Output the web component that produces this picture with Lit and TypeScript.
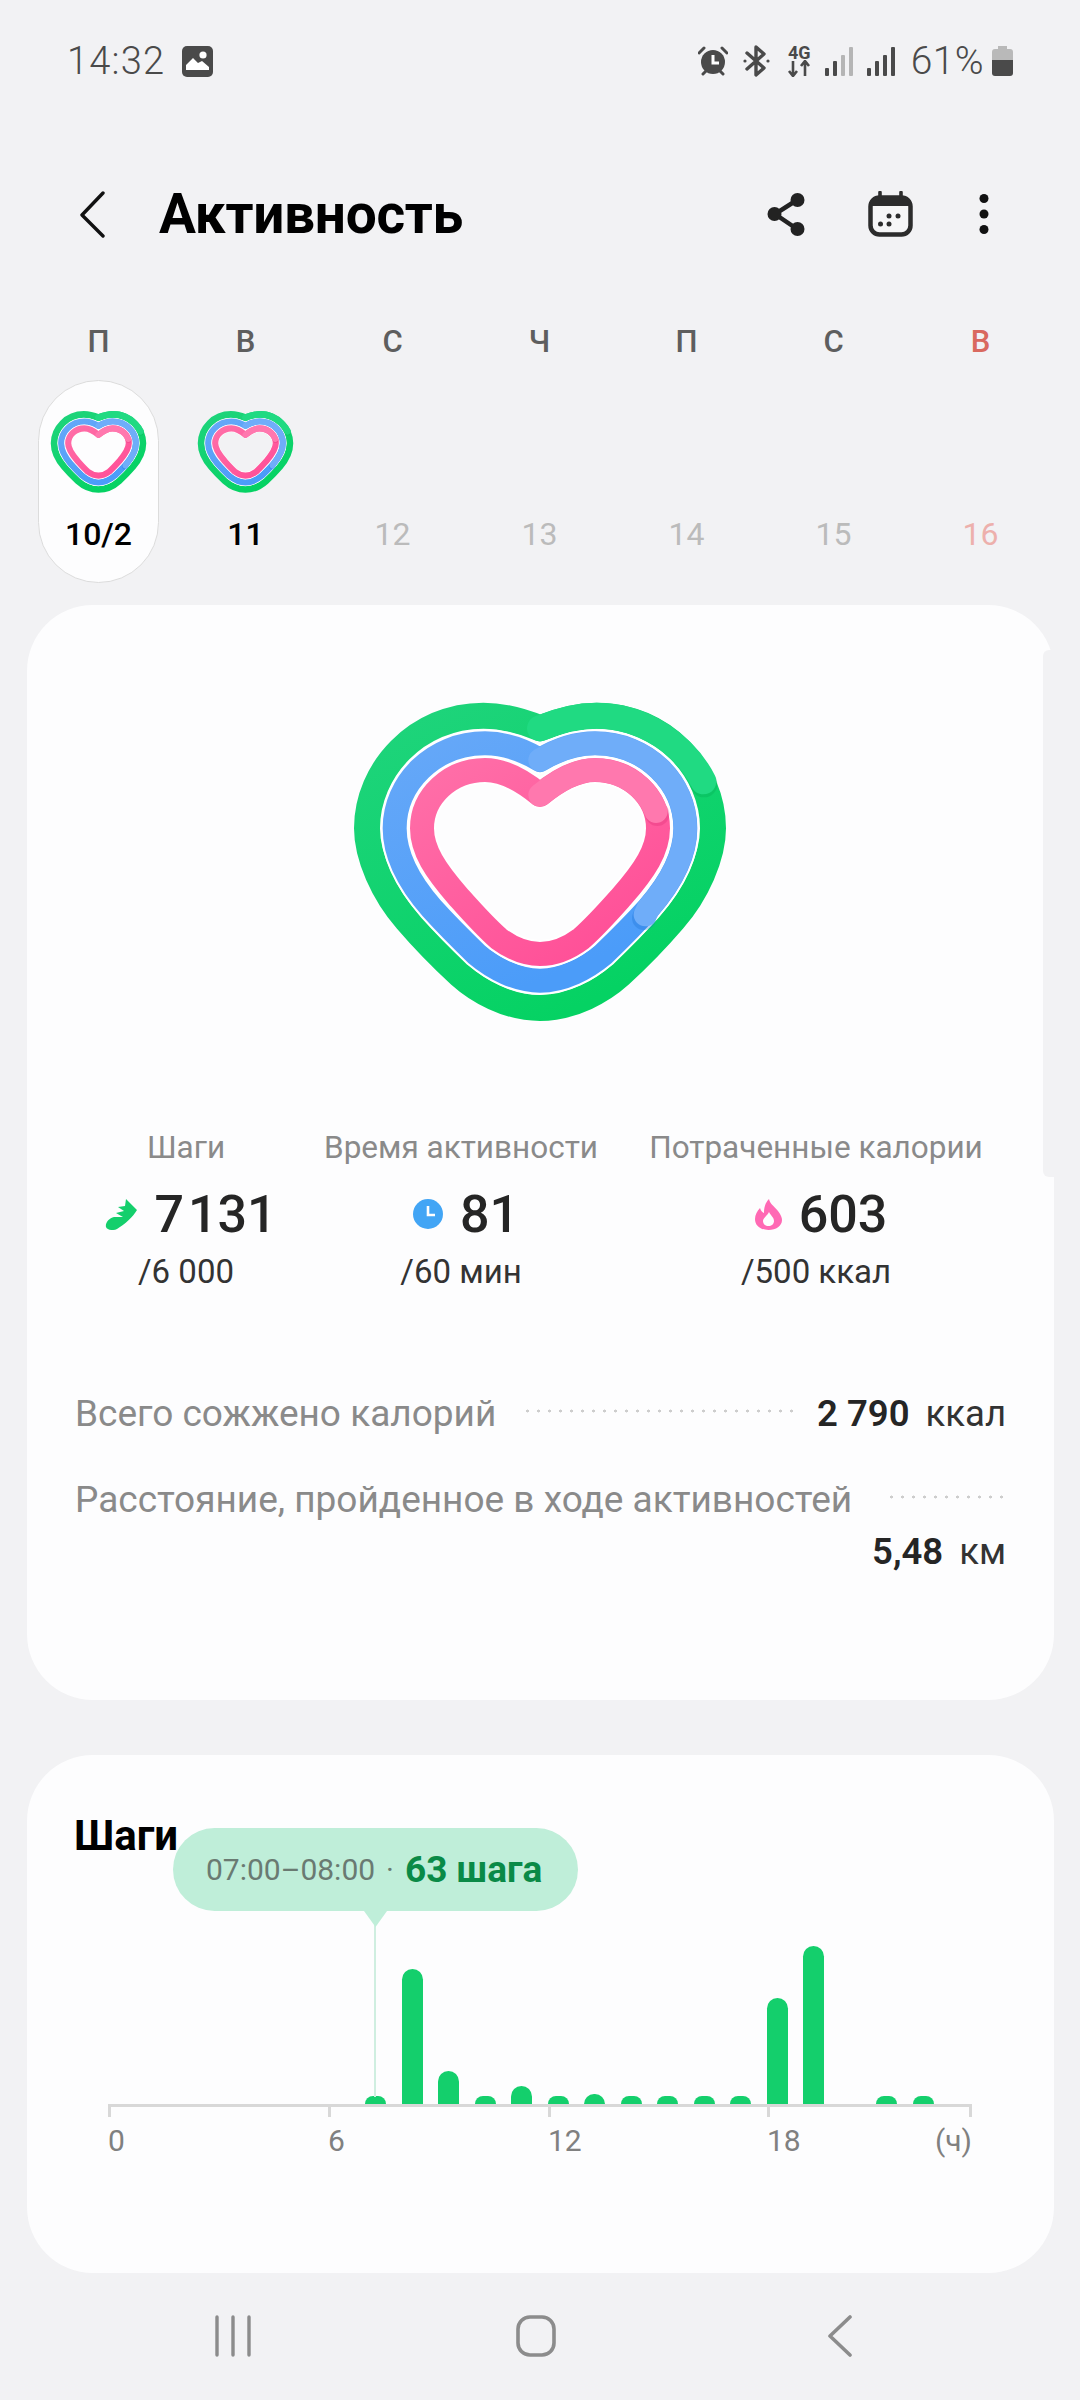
import { LitElement, html, css, svg } from "lit";
import { customElement } from "lit/decorators.js";

const GREEN = "M660 145 C720 120 770 107 830 107 C1030 107 1179 270 1179 445 C1179 530 1130 640 1060 720 C1000 790 960 830 900 885 C850 930 760 984 660 984 C560 984 470 930 420 885 C360 830 320 790 260 720 C190 640 141 530 141 445 C141 270 290 107 490 107 C550 107 600 120 660 145Z";
const BLUE = "M660 240 C710 210 770 190 825 190 C980 190 1096 310 1096 445 C1096 520 1055 605 985 685 C940 735 905 770 850 823 C800 865 730 902 660 902 C590 902 520 865 470 823 C415 770 380 735 335 685 C265 605 224 520 224 445 C224 310 340 190 495 190 C550 190 610 210 660 240Z";
const PINK = "M660 345 C700 312 760 270 825 270 C930 270 1014 350 1014 445 C1014 510 975 570 905 650 C865 695 830 735 785 775 C745 805 705 822 660 822 C615 822 575 805 535 775 C490 735 455 695 415 650 C345 570 306 510 306 445 C306 350 390 270 495 270 C560 270 620 312 660 345Z";

@customElement("activity-heart")
export class ActivityHeart extends LitElement {
  static styles = css`
    :host { display: block; }
    svg { display: block; width: 100%; height: 100%; }
  `;
  render() {
    return html`<svg viewBox="0 0 1320 1080" fill="none" stroke-linejoin="round">
      <defs>
        <linearGradient id="g" x1="0" y1="0" x2="0.6" y2="1">
          <stop offset="0" stop-color="#1fd47c"/><stop offset="1" stop-color="#05d263"/>
        </linearGradient>
        <linearGradient id="b" x1="0" y1="0" x2="0.5" y2="1">
          <stop offset="0" stop-color="#66a8f8"/><stop offset="1" stop-color="#4b9cf9"/>
        </linearGradient>
        <linearGradient id="p" x1="0" y1="0" x2="0.8" y2="1">
          <stop offset="0" stop-color="#ff6fa8"/><stop offset="1" stop-color="#ff4f97"/>
        </linearGradient>
      </defs>
      <path d=${GREEN} stroke="url(#g)" stroke-width="78"/>
      <circle cx="1152" cy="312" r="40" fill="#00a04c" opacity="0.25"/>
      <path d="M660 145 C720 120 770 107 830 107 C970 107 1095 195 1150 304" stroke="#20da82" stroke-width="78" stroke-linecap="round"/>
      <path d=${BLUE} stroke="#fff" stroke-width="84"/>
      <path d=${BLUE} stroke="url(#b)" stroke-width="72"/>
      <circle cx="972" cy="714" r="36" fill="#1a6fd0" opacity="0.3"/>
      <path d="M660 240 C710 210 770 190 825 190 C980 190 1096 310 1096 445 C1096 520 1055 605 985 685 L976 704" stroke="#6fadf9" stroke-width="70" stroke-linecap="round"/>
      <path d=${PINK} stroke="#fff" stroke-width="84"/>
      <path d=${PINK} stroke="url(#p)" stroke-width="72"/>
      <circle cx="1012" cy="402" r="36" fill="#d92a74" opacity="0.3"/>
      <path d="M660 345 C700 312 760 270 825 270 C910 270 980 322 1008 394" stroke="#ff78ae" stroke-width="70" stroke-linecap="round"/>
    </svg>`;
  }
}

const DAYS = [
  { l: "П", n: "10/2", heart: true, selected: true },
  { l: "В", n: "11", heart: true },
  { l: "С", n: "12" },
  { l: "Ч", n: "13" },
  { l: "П", n: "14" },
  { l: "С", n: "15" },
  { l: "В", n: "16", sunday: true },
];

const BARS = [0, 0, 0, 0, 0, 0, 0, 8, 135, 33, 8, 18, 8, 10, 8, 8, 8, 8, 106, 158, 0, 8, 8, 0];

const signal = (last: string) => svg`
  <rect x="0" y="21" width="4" height="8" rx="1" fill="#4a4a4a"/>
  <rect x="8" y="14" width="4" height="15" rx="1" fill="#4a4a4a"/>
  <rect x="16" y="8" width="4" height="21" rx="1" fill=${last}/>
  <rect x="24" y="0" width="4" height="29" rx="1" fill=${last}/>`;

@customElement("app-root")
export class AppRoot extends LitElement {
  static styles = css`
    :host {
      display: block;
      width: 1080px;
      height: 2400px;
      background: #f2f2f4;
      font-family: Roboto, "Liberation Sans", sans-serif;
      overflow: hidden;
      position: relative;
    }
    svg { display: block; flex: none; }

    .status {
      height: 122px;
      display: flex;
      align-items: center;
      padding: 0 67px;
      color: #4a4a4a;
      box-sizing: border-box;
    }
    .time { font-size: 38px; font-weight: 300; letter-spacing: 1.2px; margin-right: 17px; }
    .status-right { margin-left: auto; display: flex; align-items: center; }
    .pct { font-size: 39px; font-weight: 300; margin: 0 8px 0 16px; letter-spacing: 0.4px; }
    .net { width: 25px; margin-right: 13px; display: flex; flex-direction: column; align-items: center; }
    .net span { font-size: 18px; line-height: 15px; font-weight: 700; color: #4a4a4a; white-space: nowrap; }

    .header {
      height: 184px;
      display: flex;
      align-items: center;
      padding: 0 91px 0 80px;
      box-sizing: border-box;
    }
    .title {
      font-size: 55px;
      font-weight: 700;
      color: #000;
      margin-left: 54px;
      margin-right: auto;
      letter-spacing: -0.3px;
    }
    .cal { margin-left: 63px; }
    .more { margin-left: 66px; }

    .week {
      display: grid;
      grid-template-columns: repeat(7, 147px);
      padding-left: 25px;
    }
    .letter {
      height: 70px;
      display: flex;
      align-items: center;
      justify-content: center;
      font-size: 31px;
      font-weight: 500;
      color: #5e5e5e;
    }
    .letter.sun { color: #d9695f; }
    .day {
      width: 121px;
      height: 203px;
      justify-self: center;
      margin-top: 4px;
      border-radius: 61px;
      box-sizing: border-box;
      display: flex;
      flex-direction: column;
      align-items: center;
      border: 1px solid transparent;
    }
    .day.sel { background: #fdfdfe; border-color: #dcdcdc; }
    .mini { width: 113px; height: 93px; margin-top: 24px; flex: none; }
    .gap { height: 93px; margin-top: 24px; flex: none; }
    .num {
      margin-top: 16px;
      height: 40px;
      line-height: 40px;
      font-size: 32px;
      font-weight: 500;
      color: #000;
    }
    .num.off { color: #bbbbbb; font-weight: 400; }
    .num.offsun { color: #edb0ac; font-weight: 400; }

    .card {
      margin: 0 26px 0 27px;
      background: #fdfdfe;
      border-radius: 66px;
      box-sizing: border-box;
      position: relative;
    }
    .main { margin-top: 22px; height: 1095px; padding: 75px 0 0 33px; }
    .bigheart { width: 440px; height: 360px; margin-left: 260px; }
    .scroll {
      position: absolute;
      right: 0;
      top: 45px;
      width: 11px;
      height: 527px;
      background: #f2f2f4;
      border-radius: 6px 0 0 6px;
    }

    .stats {
      display: grid;
      grid-template-columns: 252px 298px 412px;
      margin-top: 88px;
      text-align: center;
    }
    .stat { display: flex; flex-direction: column; align-items: center; }
    .lab { font-size: 31.5px; line-height: 40px; color: #8a8a8a; white-space: nowrap; }
    .val {
      margin-top: 16px;
      margin-left: 10px;
      height: 60px;
      display: flex;
      align-items: center;
      gap: 17px;
      font-size: 52px;
      font-weight: 500;
      word-spacing: -9px;
      color: #252525;
      white-space: nowrap;
    }
    .sub { margin-top: 8px; font-size: 33px; line-height: 40px; color: #333; white-space: nowrap; }

    .rows { margin: 98px 48px 0 15px; display: flex; flex-direction: column; gap: 38px; }
    .row { display: flex; flex-wrap: wrap; align-items: center; }
    .rlab { font-size: 37px; line-height: 48px; color: #8a8a8a; white-space: nowrap; }
    .dots {
      flex: 1;
      min-width: 80px;
      height: 6px;
      margin: 0 24px 6px 26px;
      background: radial-gradient(circle, #cdcdcd 1.3px, transparent 1.7px) left center / 11px 6px repeat-x;
    }
    .dots.end { margin-right: 0; margin-left: 34px; }
    .rval { font-size: 36.5px; line-height: 48px; color: #333; white-space: nowrap; }
    .rval b { font-weight: 600; color: #252525; margin-right: 16px; }
    .rval.wrap { margin-left: auto; margin-top: 4px; }

    .steps { margin-top: 55px; height: 518px; padding-top: 56px; }
    .steps-title { font-size: 42px; line-height: 50px; font-weight: 700; color: #000; padding-left: 47px; }
    .plot {
      height: 243px;
      margin-left: 82.5px;
      display: flex;
      align-items: flex-end;
      gap: 15.5px;
    }
    .bar { width: 21px; flex: none; background: #14cf6c; border-radius: 11px 11px 0 0; }
    .axis { display: flex; margin-left: 81px; }
    .seg {
      height: 13px;
      box-sizing: border-box;
      border-top: 3px solid #d8d8d8;
      border-left: 3px solid #d8d8d8;
      width: 220px;
      flex: none;
    }
    .seg.last { width: 205px; border-right: 3px solid #d8d8d8; }
    .seg.s3 { width: 219px; }
    .labels { display: flex; margin-left: 81px; margin-top: 4px; font-size: 30px; line-height: 40px; color: #808080; }
    .labels > span { width: 220px; flex: none; }
    .labels > span.s3 { width: 219px; }
    .labels > span.last { width: 205px; display: flex; justify-content: space-between; }
    .tip {
      position: absolute;
      left: 146px;
      top: 73px;
      width: 405px;
      height: 83px;
      padding-left: 33px;
      box-sizing: border-box;
      background: #bfeed9;
      border-radius: 42px;
      display: flex;
      align-items: center;
      white-space: nowrap;
    }
    .tip::after {
      content: "";
      position: absolute;
      left: 191px;
      top: 83px;
      width: 23px;
      height: 16px;
      background: #bfeed9;
      clip-path: polygon(0 0, 100% 0, 50% 100%);
    }
    .range { font-size: 30px; color: #6a7a72; }
    .sep { font-size: 30px; color: #6a7a72; margin: 0 11px; }
    .count { font-size: 37px; font-weight: 700; color: #0a8a47; }
    .stem {
      position: absolute;
      left: 347px;
      top: 170px;
      width: 2px;
      height: 172px;
      background: #cfeee0;
    }

    .nav { height: 127px; display: flex; align-items: flex-start; padding: 42px 0 0 215px; box-sizing: border-box; }
    .home { margin-left: 265px; }
    .nback { margin-left: 272px; }
  `;

  render() {
    return html`
      <div class="status">
        <span class="time">14:32</span>
        <svg width="31" height="31" viewBox="0 0 31 31">
          <rect width="31" height="31" rx="5" fill="#4a4a4a"/>
          <circle cx="21" cy="9" r="3.6" fill="#fff"/>
          <path d="M4 24 V19 L11 12 L16 17 L20 15 L27 21 V24Z" fill="#fff"/>
        </svg>
        <div class="status-right">
          <svg width="30" height="30" viewBox="0 0 30 30" style="margin-right:15px">
            <circle cx="15" cy="16" r="12" fill="#4a4a4a"/>
            <path d="M15 9 V17 H21" stroke="#fff" stroke-width="3" fill="none"/>
            <path d="M1 7 L6 2 M29 7 L24 2 M5 28 L8 25 M25 28 L22 25" stroke="#4a4a4a" stroke-width="3" stroke-linecap="round"/>
          </svg>
          <svg width="27" height="32" viewBox="0 0 27 32" style="margin-right:17px" fill="none" stroke="#4a4a4a" stroke-width="3.4" stroke-linejoin="round" stroke-linecap="round">
            <path d="M4 8 L21 23 L13 30 V2 L21 9 L4 24"/>
            <circle cx="2" cy="16" r="1.6" fill="#4a4a4a" stroke="none"/>
            <circle cx="25" cy="16" r="1.6" fill="#4a4a4a" stroke="none"/>
          </svg>
          <div class="net">
            <span>4G</span>
            <svg width="25" height="17" viewBox="0 0 25 17">
              <path d="M6 1 V16 M2 11 L6 16 L10 11 M18 16 V1 M14 6 L18 1 L22 6" stroke="#4a4a4a" stroke-width="2.6" fill="none"/>
            </svg>
          </div>
          <svg width="28" height="29" viewBox="0 0 28 29" style="margin-right:14px">${signal("#b5b5b5")}</svg>
          <svg width="28" height="29" viewBox="0 0 28 29">${signal("#4a4a4a")}</svg>
          <span class="pct">61%</span>
          <svg width="21" height="30" viewBox="0 0 21 30">
            <path d="M6 0 H15 V3 H18 Q21 3 21 6 V14 H0 V6 Q0 3 3 3 H6Z" fill="#b9b9b9"/>
            <path d="M0 14 H21 V27 Q21 30 18 30 H3 Q0 30 0 27Z" fill="#4a4a4a"/>
          </svg>
        </div>
      </div>

      <div class="header">
        <svg width="25" height="47" viewBox="0 0 25 47" fill="none" stroke="#111" stroke-width="3.4" stroke-linecap="round" stroke-linejoin="round">
          <path d="M23 2 L2 24 L23 45"/>
        </svg>
        <div class="title">Активность</div>
        <svg width="38" height="43" viewBox="0 0 38 43" fill="#222">
          <path d="M30 7 L8 21 L30 36" fill="none" stroke="#222" stroke-width="4.5"/>
          <circle cx="30.5" cy="7" r="7"/><circle cx="7.5" cy="21" r="7"/><circle cx="30.5" cy="36" r="7"/>
        </svg>
        <svg class="cal" width="45" height="46" viewBox="0 0 45 46">
          <rect x="2.5" y="6.5" width="40" height="37" rx="9" fill="#f6f6f7" stroke="#2c2c2c" stroke-width="4.5"/>
          <path d="M2.5 15 V13 Q2.5 6 10 6 H35 Q42.5 6 42.5 13 V15Z" fill="#2c2c2c"/>
          <path d="M12 1.5 V8 M33 1.5 V8" stroke="#2c2c2c" stroke-width="3.6" stroke-linecap="round"/>
          <circle cx="12.5" cy="33" r="2.5" fill="#2c2c2c"/><circle cx="21" cy="33" r="2.5" fill="#2c2c2c"/>
          <circle cx="21" cy="25" r="2.5" fill="#2c2c2c"/><circle cx="30" cy="25" r="2.5" fill="#2c2c2c"/>
        </svg>
        <svg class="more" width="10" height="40" viewBox="0 0 10 40" fill="#111">
          <circle cx="5" cy="4.5" r="4.5"/><circle cx="5" cy="20" r="4.5"/><circle cx="5" cy="35.5" r="4.5"/>
        </svg>
      </div>

      <div class="week">
        ${DAYS.map((d) => html`<div class="letter ${d.sunday ? "sun" : ""}">${d.l}</div>`)}
        ${DAYS.map(
          (d) => html`<div class="day ${d.selected ? "sel" : ""}">
            ${d.heart
              ? html`<activity-heart class="mini"></activity-heart>`
              : html`<div class="gap"></div>`}
            <div class="num ${d.sunday ? "offsun" : d.heart ? "" : "off"}">${d.n}</div>
          </div>`
        )}
      </div>

      <section class="card main">
        <div class="scroll"></div>
        <activity-heart class="bigheart"></activity-heart>
        <div class="stats">
          <div class="stat">
            <div class="lab">Шаги</div>
            <div class="val">
              <svg width="32" height="31" viewBox="0 0 32 31" fill="#14cf6c">
                <path d="M21 0 L32 11 C28 18 20 25 12 30 C8 32 2 31 1 28 C0 24 4 19 9 18 L18 18 L11 14 L19 12 L13 8 L20 7Z"/>
              </svg>
              <span>7 131</span>
            </div>
            <div class="sub">/6 000</div>
          </div>
          <div class="stat">
            <div class="lab">Время активности</div>
            <div class="val">
              <svg width="30" height="30" viewBox="0 0 30 30">
                <circle cx="15" cy="15" r="15" fill="#42a5f5"/>
                <path d="M15 7 V16 H22" stroke="#fff" stroke-width="2.6" fill="none"/>
              </svg>
              <span>81</span>
            </div>
            <div class="sub">/60 мин</div>
          </div>
          <div class="stat">
            <div class="lab">Потраченные калории</div>
            <div class="val">
              <svg width="27" height="31" viewBox="0 0 27 31">
                <path d="M14 0 C15 5 19 7 23 12 C26 16 27 19 27 21 C27 27 21 31 13.5 31 C6 31 0 27 0 20 C0 16 2 12 5 9 C6 12 7 13 9 14 C9 9 10 4 14 0Z" fill="#ff69b4"/>
                <path d="M14 13 C15 16 19 18 19 22 C19 25 16.5 27 13.5 27 C10.5 27 8 25 8 22 C8 19 12 17 14 13Z" fill="#fdfdfe"/>
              </svg>
              <span>603</span>
            </div>
            <div class="sub">/500 ккал</div>
          </div>
        </div>
        <div class="rows">
          <div class="row">
            <span class="rlab">Всего сожжено калорий</span>
            <span class="dots"></span>
            <span class="rval"><b>2 790</b>ккал</span>
          </div>
          <div class="row">
            <span class="rlab">Расстояние, пройденное в ходе активностей</span>
            <span class="dots end"></span>
            <span class="rval wrap"><b>5,48</b>км</span>
          </div>
        </div>
      </section>

      <section class="card steps">
        <div class="steps-title">Шаги</div>
        <div class="plot">
          ${BARS.map((h) => html`<div class="bar" style="height:${h}px"></div>`)}
        </div>
        <div class="axis">
          <div class="seg"></div><div class="seg"></div><div class="seg s3"></div><div class="seg last"></div>
        </div>
        <div class="labels">
          <span>0</span><span>6</span><span class="s3">12</span>
          <span class="last"><span>18</span><span>(ч)</span></span>
        </div>
        <div class="stem"></div>
        <div class="tip">
          <span class="range">07:00–08:00</span><span class="sep">·</span><span class="count">63 шага</span>
        </div>
      </section>

      <div class="nav">
        <svg width="36" height="42" viewBox="0 0 36 42" stroke="#8c8c8c" stroke-width="3.4" stroke-linecap="round">
          <path d="M2 2 V40 M18 2 V40 M34 2 V40"/>
        </svg>
        <svg class="home" width="40" height="42" viewBox="0 0 40 42" fill="none" stroke="#8c8c8c" stroke-width="3.6">
          <rect x="2" y="2" width="36" height="38" rx="12"/>
        </svg>
        <svg class="nback" width="24" height="42" viewBox="0 0 24 42" fill="none" stroke="#8c8c8c" stroke-width="3.6" stroke-linecap="round" stroke-linejoin="round">
          <path d="M22 2 L2 21 L22 40"/>
        </svg>
      </div>
    `;
  }
}
